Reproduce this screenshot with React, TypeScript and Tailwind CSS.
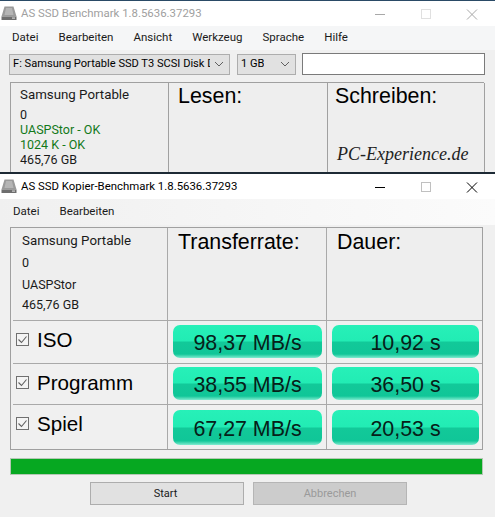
import React from "react";

const ui = "font-['Roboto','Noto_Sans',sans-serif]";
const arial = "font-['Liberation_Sans',Arial,sans-serif]";

function DriveIcon() {
  return (
    <svg width="16" height="16" viewBox="0 0 16 16" className="shrink-0">
      <path d="M3.5 1.5h9l3 10H.5z" fill="#9a9a9a" />
      <path d="M5 3h6l1.5 7h-9z" fill="#b5b5b5" />
      <rect x="0.5" y="11.5" width="15" height="3.5" fill="#6e6e6e" />
      <rect x="11" y="12.5" width="3" height="1.2" fill="#cfcfcf" />
    </svg>
  );
}

function Controls({ active }: { active: boolean }) {
  const c = active ? "#000000" : "#a8a8a8";
  return (
    <div className="flex items-center">
      <svg width="46" height="26" viewBox="0 0 46 26"><path d="M18 13.5h10" stroke={c} strokeWidth="1" /></svg>
      <svg width="46" height="26" viewBox="0 0 46 26"><rect x="18.5" y="8.5" width="9" height="9" fill="none" stroke={active ? "#c0c0c0" : "#e0e0e0"} /></svg>
      <svg width="46" height="26" viewBox="0 0 46 26"><path d="M18 8.5l10 10M28 8.5l-10 10" stroke={c} strokeWidth="1" /></svg>
    </div>
  );
}

function TitleBar({ title, active }: { title: string; active: boolean }) {
  return (
    <div className="flex h-[25px] items-center justify-between bg-white pl-[1px]">
      <div className="flex items-center gap-[4px]">
        <DriveIcon />
        <span className={`${ui} text-[11.4px] ${active ? "text-black" : "text-[#a0a0a0]"}`}>{title}</span>
      </div>
      <Controls active={active} />
    </div>
  );
}

function Select({ text, className }: { text: string; className: string }) {
  return (
    <div className={`flex h-[21px] items-center justify-between overflow-hidden border border-[#adadad] bg-[#e1e1e1] pl-[3px] pr-[5px] ${className}`}>
      <span className={`${ui} overflow-hidden whitespace-nowrap text-[11.1px] text-black`}>{text}</span>
      <svg width="10" height="6" viewBox="0 0 10 6" className="ml-1 shrink-0"><path d="M1 1l4 4 4-4" fill="none" stroke="#606060" /></svg>
    </div>
  );
}

function Pill({ text, className }: { text: string; className: string }) {
  return (
    <div className={`flex items-center justify-center rounded-[7px] bg-[linear-gradient(180deg,#27f0b8_0%,#22ecb4_48%,#12c999_52%,#10c698_88%,#7fecd0_100%)] pt-[4px] ${arial} text-[21.4px] text-[#062018] ${className}`}>
      {text}
    </div>
  );
}

function Check({ label }: { label: string }) {
  return (
    <div className="flex items-start gap-[8px] pl-[3px] pt-[7px]">
      <svg width="13" height="13" viewBox="0 0 13 13" className="mt-[5px] shrink-0">
        <rect x="0.5" y="0.5" width="12" height="12" fill="#f4f4f4" stroke="#707070" />
        <path d="M2.5 6.5l3 3 5-6" fill="none" stroke="#606060" strokeWidth="1.1" />
      </svg>
      <span className={`${arial} text-[20.6px] leading-[23px] text-black`}>{label}</span>
    </div>
  );
}

const head = `${arial} text-[21.4px] leading-[24px] text-black`;
const info = `${ui} text-[12.5px] text-[#1a1a1a]`;
const name = `${ui} text-[13.3px] leading-[20px] text-[#1a1a1a]`;

function TopWindow() {
  return (
    <div className="h-[174px] overflow-hidden border-b-2 border-[#1d2a35] border-t-[1px] border-t-[#2a4a66] bg-[#f0f0f0]">
      <TitleBar title="AS SSD Benchmark 1.8.5636.37293" active={false} />
      <div className={`${ui} flex h-[24px] items-center gap-[20px] bg-[#f5f6f7] pl-[12px] text-[11.5px] text-[#1a1a1a]`}>
        <span>Datei</span><span>Bearbeiten</span><span>Ansicht</span><span>Werkzeug</span><span>Sprache</span><span>Hilfe</span>
      </div>
      <div className="flex items-center pl-[9px] pt-[3px]">
        <Select text="F: Samsung Portable SSD T3 SCSI Disk D" className="w-[221px]" />
        <Select text="1 GB" className="ml-[7px] w-[59px]" />
        <div className="ml-[6px] h-[22px] w-[183px] border border-[#7a7a7a] bg-white" />
      </div>
      <div className="ml-[10px] mt-[7px] grid h-[96px] w-[474px] grid-cols-[158px_159px_157px] border-l border-t border-l-[#a0a0a0] border-t-[#a0a0a0] bg-[#eeeeee]">
        <div className="flex flex-col border-r border-[#a0a0a0] pl-[9px] pt-[2px]">
          <span className={name}>Samsung Portable</span>
          <span className={`${info} mt-[2px] leading-[15px]`}>0</span>
          <span className={`${ui} text-[12.5px] leading-[15px] text-[#12791a]`}>UASPStor - OK</span>
          <span className={`${ui} text-[12.5px] leading-[15px] text-[#12791a]`}>1024 K - OK</span>
          <span className={`${info} leading-[15px]`}>465,76 GB</span>
        </div>
        <div className={`border-r border-[#a0a0a0] pl-[9px] pt-[1px] ${head}`}>Lesen:</div>
        <div className="flex flex-col border-r border-[#a0a0a0] pl-[7px] pt-[1px]">
          <span className={head}>Schreiben:</span>
          <span className="ml-[2px] mt-[35px] font-['Liberation_Serif',serif] text-[18px] italic leading-[22px] text-[#222222]">PC-Experience.de</span>
        </div>
      </div>
    </div>
  );
}

function BottomWindow() {
  const rows = [
    { label: "ISO", a: "98,37 MB/s", b: "10,92 s", cls: "h-[43px]", pill: "h-[33px] mt-[4px]" },
    { label: "Programm", a: "38,55 MB/s", b: "36,50 s", cls: "h-[41px]", pill: "h-[33px] mt-[3px]" },
    { label: "Spiel", a: "67,27 MB/s", b: "20,53 s", cls: "h-[44px]", pill: "h-[35px] mt-[5px]" },
  ];
  return (
    <div className="h-[343px] bg-[#f0f0f0]">
      <TitleBar title="AS SSD Kopier-Benchmark 1.8.5636.37293" active />
      <div className={`${ui} flex h-[26px] items-center gap-[20px] bg-[linear-gradient(90deg,#f0f0f0,#fbfbfb)] pl-[13px] text-[11.5px] text-[#1a1a1a]`}>
        <span>Datei</span><span>Bearbeiten</span>
      </div>
      <div className="ml-[10px] mt-[2px] w-[473px] border border-[#a0a0a0]">
        <div className="grid grid-cols-[155px_159px_155px] pl-[2px]">
          <div className="flex h-[93px] flex-col border-b border-r border-[#a9a9a9] bg-[#eeeeee] pl-[9px] pt-[3px]">
            <span className={name}>Samsung Portable</span>
            <span className={`${info} mt-[2px] leading-[20px]`}>0</span>
            <span className={`${info} mt-[2px] leading-[20px]`}>UASPStor</span>
            <span className={`${info} leading-[20px]`}>465,76 GB</span>
          </div>
          <div className={`h-[93px] border-b border-r border-[#a9a9a9] bg-[#eeeeee] pl-[10px] pt-[2px] ${head}`}>Transferrate:</div>
          <div className={`h-[93px] border-b border-[#a9a9a9] bg-[#eeeeee] pl-[10px] pt-[2px] ${head}`}>Dauer:</div>
          {rows.map((r, i) => (
            <React.Fragment key={r.label}>
              <div className={`${r.cls} border-r border-[#a9a9a9] ${i < 2 ? "border-b" : ""}`}><Check label={r.label} /></div>
              <div className={`${r.cls} border-r border-[#a9a9a9] pl-[5px] pr-[4px] ${i < 2 ? "border-b" : ""}`}><Pill text={r.a} className={r.pill} /></div>
              <div className={`${r.cls} pl-[5px] pr-[3px] ${i < 2 ? "border-b border-[#a9a9a9]" : ""}`}><Pill text={r.b} className={r.pill} /></div>
            </React.Fragment>
          ))}
        </div>
      </div>
      <div className="ml-[10px] mt-[8px] h-[17px] w-[473px] border border-[#b4c8b4] bg-[#06a821]" />
      <div className="mt-[7px] flex gap-[9px] pl-[90px]">
        <div className={`${ui} flex h-[23px] w-[154px] items-center justify-center border border-[#adadad] bg-[#e1e1e1] pt-[2px] pr-[3px] text-[11px] text-[#1a1a1a]`}>Start</div>
        <div className={`${ui} flex h-[23px] w-[154px] items-center justify-center border border-[#b5b5b5] bg-[#cccccc] pt-[2px] text-[11px] text-[#9a9a9a]`}>Abbrechen</div>
      </div>
    </div>
  );
}

export default function App() {
  return (
    <div className="h-[517px] w-[495px] overflow-hidden bg-[#f0f0f0]">
      <TopWindow />
      <BottomWindow />
    </div>
  );
}
